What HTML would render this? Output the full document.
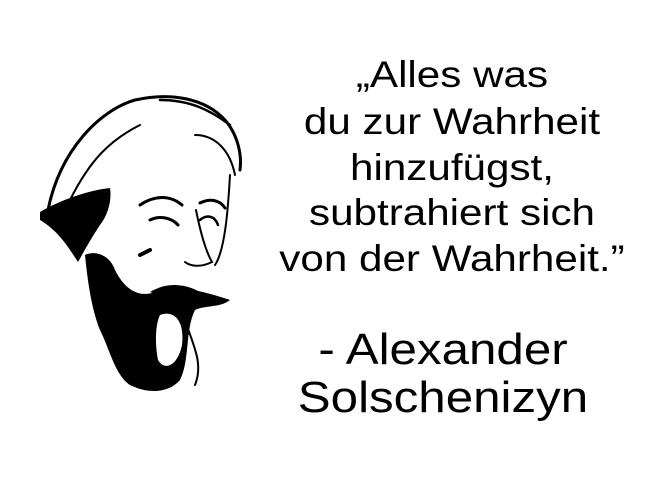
<!DOCTYPE html>
<html><head><meta charset="utf-8"><style>
html,body{margin:0;padding:0;background:#fff;width:666px;height:500px;overflow:hidden;position:relative}
.t{position:absolute;font-family:"Liberation Sans",Arial,sans-serif;color:#000;white-space:nowrap;transform-origin:center;text-align:center}
.q{font-size:37px;left:252px;width:400px;transform:scaleX(1.14)}
.a{font-size:44px;left:243px;width:400px;transform:scaleX(1.12)}
</style></head><body>
<svg width="666" height="500" style="position:absolute;left:0;top:0" viewBox="0 0 666 500">
<g fill="none" stroke="#000" stroke-linecap="round">
<path d="M48 210 C60 150 100 110 135 100 C170 92 205 98 225 120 C238 135 242 155 240 170" stroke-width="3"/>
<path d="M70 200 C90 160 110 140 140 125" stroke-width="2"/>
<path d="M160 100 C190 100 210 110 230 125" stroke-width="2.5"/>
<path d="M195 135 C215 135 230 150 235 175" stroke-width="2"/>
<path d="M230 175 C228 210 225 250 215 265" stroke-width="2"/>
<path d="M140 205 C155 195 170 195 182 205" stroke-width="3"/>
<path d="M200 203 C210 198 220 200 225 208" stroke-width="3"/>
<path d="M150 220 C160 215 172 218 178 225" stroke-width="3"/>
<path d="M200 220 C207 214 215 216 218 225" stroke-width="2.5"/>
<path d="M196 210 C200 230 205 250 212 262 C200 268 190 266 185 262" stroke-width="2"/>
<path d="M140 255 L150 250" stroke-width="4"/>
<path d="M178 300 C190 340 205 360 195 385" stroke-width="2"/>
</g>
<g fill="#000">
<path d="M40 212 C60 200 90 190 110 188 C112 200 108 215 100 225 C90 240 82 255 78 262 C70 250 60 232 40 220 Z"/>
<path d="M85 255 C95 250 110 255 115 270 C125 290 140 300 160 290 C175 285 200 290 230 300 C220 308 205 305 195 310 C185 330 190 360 180 380 C170 392 150 395 130 385 C115 375 110 350 100 330 C92 310 88 285 85 255 Z"/>
<path d="M150 292 C170 280 190 285 205 295 C190 300 170 300 150 292 Z"/>
</g>
<g fill="#fff"><path d="M160 315 C172 310 185 318 182 345 C178 365 165 372 158 360 C155 345 155 325 160 315 Z"/></g>
</svg>
<div class="t q" style="top:54px">„Alles was</div>
<div class="t q" style="top:101px">du zur Wahrheit</div>
<div class="t q" style="top:147px">hinzufügst,</div>
<div class="t q" style="top:192px">subtrahiert sich</div>
<div class="t q" style="top:238px">von der Wahrheit.”</div>
<div class="t a" style="top:325px">- Alexander</div>
<div class="t a" style="top:373px">Solschenizyn</div>
</body></html>
